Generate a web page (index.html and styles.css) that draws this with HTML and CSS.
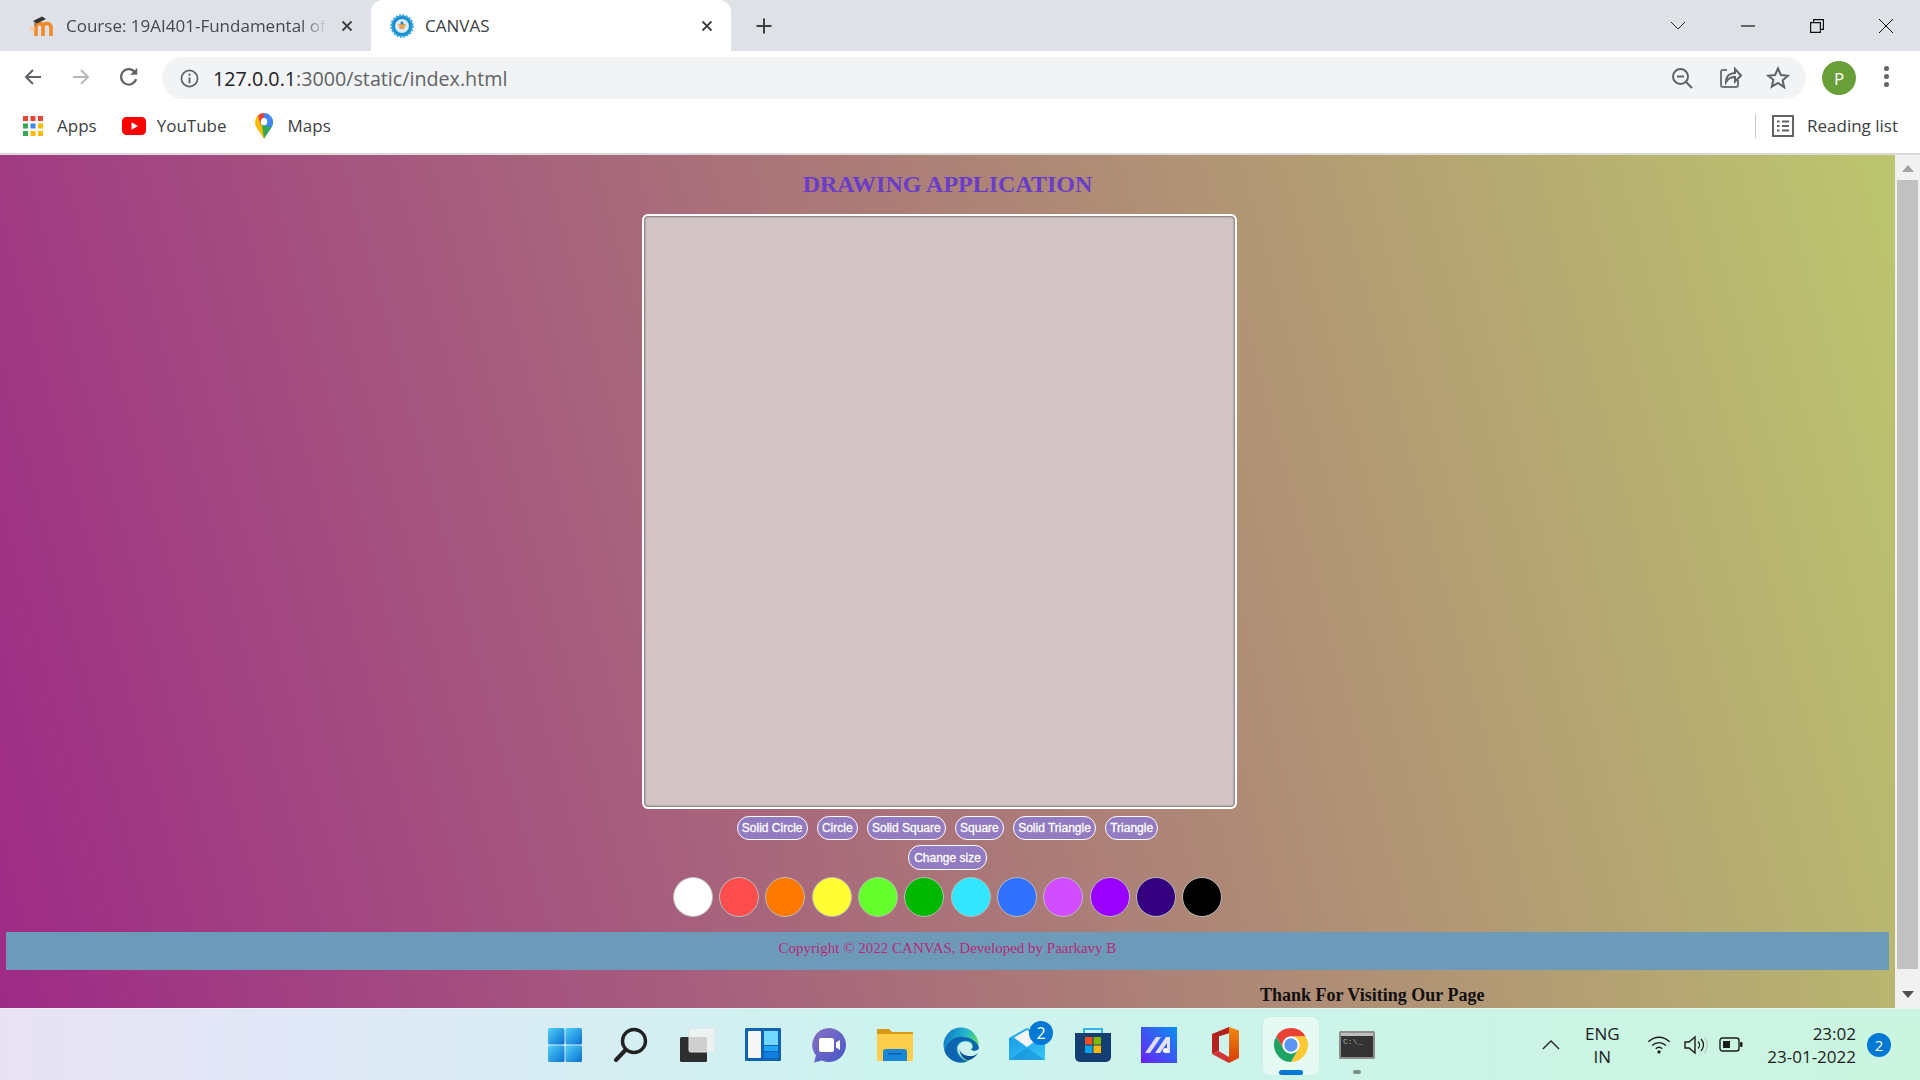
FILE: index.html
```html
<!DOCTYPE html>
<html lang="en">
<head>
<meta charset="utf-8">
<title>CANVAS</title>
<link rel="stylesheet" href="styles.css">
</head>
<body>
<svg class="defs" width="0" height="0" aria-hidden="true">
  <defs>
    <linearGradient id="gWin" x1="0" y1="0" x2="1" y2="1"><stop offset="0" stop-color="#4fd0fb"/><stop offset="1" stop-color="#0a6fd0"/></linearGradient>
    <linearGradient id="gChat" x1="0" y1="0" x2="1" y2="1"><stop offset="0" stop-color="#8a70c4"/><stop offset="1" stop-color="#4457c8"/></linearGradient>
    <linearGradient id="gEdge" x1="0" y1="0" x2="1" y2="0.4"><stop offset="0" stop-color="#0d6fc0"/><stop offset=".6" stop-color="#22b5d0"/><stop offset="1" stop-color="#5fdc6a"/></linearGradient>
    <linearGradient id="gMail" x1="0" y1="0" x2="1" y2="1"><stop offset="0" stop-color="#1a9be6"/><stop offset="1" stop-color="#38c8f5"/></linearGradient>
    <linearGradient id="gMae" x1="0" y1="1" x2="1" y2="0"><stop offset="0" stop-color="#6a20f5"/><stop offset="1" stop-color="#0a90f5"/></linearGradient>
    <linearGradient id="gOff" x1="0" y1="0" x2="0" y2="1"><stop offset="0" stop-color="#f08a12"/><stop offset="1" stop-color="#d83b01"/></linearGradient>
  </defs>
</svg>

<header class="tabstrip">
  <div class="tab">
    <svg class="fav" viewBox="0 0 24 24"><path d="M6 22V13c0-2.500 1.500-3.500 3.500-3.500S13 10.500 13 13v9M13 13c0-2.500 1.800-3.500 3.800-3.500S21 11 21 13.500V22" fill="none" stroke="#f0882a" stroke-width="3.600"/><path d="M0 13h4.500v3.500H0z" fill="#f7c9a0"/><path d="M3 7l9-4.500 4 2.500-9 4.500z" fill="#333"/><path d="M5 8v4" stroke="#555" stroke-width="1"/></svg>
    <span class="tab-title fade">Course: 19AI401-Fundamental of</span>
    <svg class="tab-x" viewBox="0 0 12 12"><path d="M1.500 1.500l9 9M10.500 1.500l-9 9" stroke="#3c4043" stroke-width="1.800"/></svg>
  </div>
  <div class="tab active">
    <svg class="fav fav-c" viewBox="0 0 24 24"><circle cx="12" cy="12" r="10.500" fill="#1a8fd0" stroke="#3aa8e0" stroke-width="2.500" stroke-dasharray="2 1.300"/><circle cx="12" cy="12" r="7" fill="#d8ebf7"/><path d="M8 10h8l-2 5h-4z" fill="#e8a45c"/><circle cx="12" cy="9" r="1.500" fill="#2b7bb5"/></svg>
    <span class="tab-title">CANVAS</span>
    <svg class="tab-x" viewBox="0 0 12 12"><path d="M1.500 1.500l9 9M10.500 1.500l-9 9" stroke="#3c4043" stroke-width="1.800"/></svg>
  </div>
  <svg class="newtab" viewBox="0 0 18 18"><path d="M9 1.500v15M1.500 9h15" stroke="#3c4043" stroke-width="2"/></svg>
  <div class="winctl">
    <svg viewBox="0 0 16 10" class="w-chev"><path d="M1 1l7 7 7-7" fill="none" stroke="#222" stroke-width="1"/></svg>
    <svg viewBox="0 0 14 14" class="w-ico"><path d="M0 7h14" stroke="#111" stroke-width="1.200"/></svg>
    <svg viewBox="0 0 14 14" class="w-ico"><path d="M.6 3.600h9.800v9.800H.6zM3.600 3.600V.6h9.800v9.800h-3" fill="none" stroke="#111" stroke-width="1.200"/></svg>
    <svg viewBox="0 0 14 14" class="w-ico"><path d="M0 0l14 14M14 0L0 14" stroke="#111" stroke-width="1"/></svg>
  </div>
</header>

<nav class="toolbar">
  <svg class="nav-ico" viewBox="0 0 20 20"><path d="M18 10H3M10 3l-7 7 7 7" fill="none" stroke="#5f6368" stroke-width="2"/></svg>
  <svg class="nav-ico" viewBox="0 0 20 20"><path d="M2 10h15M10 3l7 7-7 7" fill="none" stroke="#b5b7ba" stroke-width="2"/></svg>
  <svg class="nav-ico nav-reload" viewBox="0 0 20 20"><path d="M16.500 12a7 7 0 1 1-1.200-6.500" fill="none" stroke="#5f6368" stroke-width="2"/><path d="M17.500 1.500v6.500H11z" fill="#5f6368"/></svg>
  <div class="omnibox">
    <svg class="info" viewBox="0 0 20 20"><circle cx="10" cy="10" r="8.500" fill="none" stroke="#5f6368" stroke-width="1.800"/><path d="M10 9v6M10 5v2" stroke="#5f6368" stroke-width="2"/></svg>
    <span class="url"><span class="host">127.0.0.1</span>:3000/static/index.html</span>
    <div class="omni-right">
      <svg class="omni-ico" viewBox="0 0 24 24"><circle cx="10.500" cy="10.500" r="7.500" fill="none" stroke="#5f6368" stroke-width="2"/><path d="M7 10.500h7M16 16l6 6" stroke="#5f6368" stroke-width="2"/></svg>
      <svg class="omni-ico" viewBox="0 0 24 24"><path d="M9 4H5a2 2 0 0 0-2 2v13a2 2 0 0 0 2 2h13a2 2 0 0 0 2-2v-5" fill="none" stroke="#73767a" stroke-width="2"/><path d="M8 16c0-6 4-9 9-9V3l6 6.500-6 6V11c-4 0-7 1.500-9 5z" fill="none" stroke="#5f6368" stroke-width="2"/></svg>
      <svg class="omni-ico" viewBox="0 0 24 24"><path d="M12 2.500l2.900 6.500 7 .7-5.300 4.600 1.600 6.900L12 17l-6.200 3.700 1.600-6.900L2.100 9.700l7-.7z" fill="none" stroke="#5f6368" stroke-width="2"/></svg>
    </div>
  </div>
  <div class="avatar">P</div>
  <div class="kebab"><i></i><i></i><i></i></div>
</nav>

<nav class="bookmarks">
  <div class="bm bm-apps">
    <svg class="bm-ico" viewBox="0 0 20 20"><g fill="#ea4335"><rect x="0" y="0" width="5" height="5"/><rect x="7.500" y="0" width="5" height="5"/><rect x="15" y="0" width="5" height="5"/></g><rect x="0" y="7.500" width="5" height="5" fill="#34a853"/><rect x="7.500" y="7.500" width="5" height="5" fill="#4285f4"/><rect x="15" y="7.500" width="5" height="5" fill="#fbbc04"/><rect x="0" y="15" width="5" height="5" fill="#34a853"/><rect x="7.500" y="15" width="5" height="5" fill="#fbbc04"/><rect x="15" y="15" width="5" height="5" fill="#fbbc04"/></svg>
    <span>Apps</span>
  </div>
  <div class="bm bm-yt">
    <svg class="yt-ico" viewBox="0 0 24 18"><rect width="24" height="18" rx="4.500" fill="#f00"/><path d="M9.500 5.200v7.600l6.500-3.800z" fill="#fff"/></svg>
    <span>YouTube</span>
  </div>
  <div class="bm bm-maps">
    <svg class="maps-ico" viewBox="0 0 18 26"><path d="M9 26C6 20 0 15 0 9a9 9 0 0 1 3-6.700L9 9z" fill="#fbbc04"/><path d="M3 2.300A9 9 0 0 1 9 0l0 5a4 4 0 0 0-3 1.400z" fill="#ea4335"/><path d="M9 0a9 9 0 0 1 7 3.400L12 7a4 4 0 0 0-3-2z" fill="#4285f4"/><path d="M16 3.400A9 9 0 0 1 18 9c0 6-6 11-9 17l-2-14z" fill="#34a853"/><path d="M16 3.400A9 9 0 0 1 18 9c0 2-.7 3.800-1.700 5.500L5.500 11.500z" fill="#4285f4"/><path d="M5.500 11.500L3 2.300 9 9z" fill="#ea4335"/><circle cx="9" cy="9" r="3.300" fill="#fff"/></svg>
    <span>Maps</span>
  </div>
  <div class="reading">
    <svg class="rl-ico" viewBox="0 0 22 22"><rect x="1" y="1" width="20" height="20" fill="none" stroke="#5f6368" stroke-width="2"/><path d="M5 6.500h2.500M10 6.500h7M5 11h2.500M10 11h7M5 15.500h2.500M10 15.500h7" stroke="#5f6368" stroke-width="2"/></svg>
    <span>Reading list</span>
  </div>
</nav>

<div class="viewport">
  <main class="page">
    <h1 class="title">DRAWING APPLICATION</h1>
    <div class="board"></div>
    <div class="tools">
      <button class="tool">Solid Circle</button>
      <button class="tool">Circle</button>
      <button class="tool">Solid Square</button>
      <button class="tool">Square</button>
      <button class="tool">Solid Triangle</button>
      <button class="tool">Triangle</button>
      <button class="tool tool-size">Change size</button>
    </div>
    <div class="palette">
      <span class="swatch c-white"></span>
      <span class="swatch c-red"></span>
      <span class="swatch c-orange"></span>
      <span class="swatch c-yellow"></span>
      <span class="swatch c-lime"></span>
      <span class="swatch c-green"></span>
      <span class="swatch c-cyan"></span>
      <span class="swatch c-blue"></span>
      <span class="swatch c-pink"></span>
      <span class="swatch c-violet"></span>
      <span class="swatch c-indigo"></span>
      <span class="swatch c-black"></span>
    </div>
    <footer class="copyright">Copyright © 2022 CANVAS, Developed by Paarkavy B</footer>
    <p class="thanks">Thank For Visiting Our Page</p>
  </main>
  <aside class="scrollbar">
    <svg class="sb-arrow" viewBox="0 0 12 7"><path d="M0 7L6 0l6 7z" fill="#a3a3a3"/></svg>
    <div class="sb-thumb"></div>
    <svg class="sb-arrow" viewBox="0 0 12 7"><path d="M0 0l6 7 6-7z" fill="#505050"/></svg>
  </aside>
</div>

<footer class="taskbar">
  <div class="task-icons">
    <div class="ti"><svg viewBox="0 0 36 36"><rect x="1" y="1" width="16.500" height="16.500" rx="1.500" fill="url(#gWin)"/><rect x="18.500" y="1" width="16.500" height="16.500" rx="1.500" fill="url(#gWin)"/><rect x="1" y="18.500" width="16.500" height="16.500" rx="1.500" fill="url(#gWin)"/><rect x="18.500" y="18.500" width="16.500" height="16.500" rx="1.500" fill="url(#gWin)"/></svg></div>
    <div class="ti"><svg viewBox="0 0 36 36"><circle cx="21" cy="14" r="11.500" fill="none" stroke="#222" stroke-width="3.400"/><path d="M12.500 23L3 33" stroke="#222" stroke-width="4" stroke-linecap="round"/></svg></div>
    <div class="ti"><svg viewBox="0 0 36 36"><rect x="1" y="10" width="27" height="25" rx="1.500" fill="#2e2e2e"/><rect x="10" y="1" width="26" height="24" rx="1.500" fill="#f2f2f2" fill-opacity=".82" stroke="#e2e2e2"/></svg></div>
    <div class="ti"><svg viewBox="0 0 36 36"><rect x="0" y="1" width="36" height="33" rx="1" fill="#0f63b0"/><rect x="3" y="4" width="13" height="27" rx="1" fill="#f7f7f7"/><rect x="19" y="4" width="14" height="14" fill="#6fd8fb"/><rect x="19" y="19" width="14" height="5" fill="#1ea6f5"/><rect x="19" y="25" width="14" height="6" fill="#0f80e0"/></svg></div>
    <div class="ti"><svg viewBox="0 0 36 36"><path d="M18 1a17 17 0 1 1-7 32.500L3 35.500l2-7A17 17 0 0 1 18 1z" fill="url(#gChat)"/><rect x="8" y="11" width="15" height="14" rx="2" fill="#fff"/><path d="M25 15.500l4-2.500v10l-4-2.500z" fill="#fff"/></svg></div>
    <div class="ti"><svg viewBox="0 0 36 36"><path d="M0 3a1 1 0 0 1 1-1h11l3 3h20a1 1 0 0 1 1 1v6H0z" fill="#d69a10"/><rect x="0" y="7" width="36" height="27" rx="1" fill="#fcce4b"/><path d="M6 34V25a3 3 0 0 1 3-3h18a3 3 0 0 1 3 3v9z" fill="#1a86d8"/><rect x="11" y="26" width="14" height="1.500" fill="#0c5fa8"/></svg></div>
    <div class="ti"><svg viewBox="0 0 36 36"><circle cx="18" cy="18" r="17.500" fill="url(#gEdge)"/><path d="M36 21c-1 4-6 3.500-8 1.500 3-1 2.500-6-1.500-8-6-2.500-13 1-13 7 0 6 5 11 11 13-7 3-20 0-23-11C5 14 12 9 20 10c8 .5 15 5 16 11z" fill="#0f64b2"/><path d="M35.500 22c-2 2.500-6 2.500-8 .5 3-1.500 2-6-1.500-7.500-5.500-2-11.500 1-11.500 6.500 0 5 4 9.500 10 12 5-1 9-5.500 11-11.500z" fill="#cdf3ee"/><path d="M24.500 33.500c-4-1.500-8-6-8-11 1 4 6 7 12 6.500 3-.2 5-1.500 6.500-3-2 3.500-6 6.800-10.500 7.500z" fill="#0d4f94"/></svg></div>
    <div class="ti ti-mail"><svg viewBox="0 0 36 36"><path d="M0 11L18 1l18 10v22H0z" fill="url(#gMail)"/><path d="M5 10.500L18 3l13 7.500L18 20z" fill="#f5f5f5"/><path d="M0 11l18 10 18-10v22H0z" fill="url(#gMail)"/><path d="M0 33l18-12 18 12z" fill="#1088d8" fill-opacity=".55"/></svg><span class="ti-badge">2</span></div>
    <div class="ti"><svg viewBox="0 0 36 36"><path d="M9 6V2h18v4" fill="none" stroke="#35b5e8" stroke-width="2"/><path d="M0 6h36v24a5 5 0 0 1-5 5H5a5 5 0 0 1-5-5z" fill="#143f72"/><rect x="10" y="10" width="7.500" height="7.500" fill="#f25022"/><rect x="18.500" y="10" width="7.500" height="7.500" fill="#7fba00"/><rect x="10" y="18.500" width="7.500" height="7.500" fill="#00a4ef"/><rect x="18.500" y="18.500" width="7.500" height="7.500" fill="#ffb900"/></svg></div>
    <div class="ti"><svg viewBox="0 0 36 36"><rect width="36" height="36" fill="url(#gMae)"/><path d="M4 26L15 10h5L9 26z" fill="#dcdcfa"/><path d="M14 26L25 10h4v16h-3V16L19 26z" fill="#e4e2fb"/><circle cx="24.500" cy="23.500" r="2.500" fill="#fff"/></svg></div>
    <div class="ti"><svg viewBox="0 0 28 36"><path d="M18 0l10 3.500V31l-10 5z" fill="url(#gOff)"/><path d="M18 0L1 7v20l7-3V9.500l10-3z" fill="#b3231e"/><path d="M1 27l17 9v-6l-10-6z" fill="#d13438"/><path d="M8 9.500L18 6.500v23L8 24z" fill="#cdf3ee"/></svg></div>
    <div class="ti ti-open"><svg viewBox="-17 -17 34 34"><path d="M-13.860-8A16 16 0 0 1 13.860-8L0-8A8 8 0 0 0-6.930 4Z" fill="#e94235"/><path d="M13.860-8A16 16 0 0 1 0 16L6.930 4A8 8 0 0 0 0-8Z" fill="#fcc934"/><path d="M0 16A16 16 0 0 1-13.860-8L-6.930 4A8 8 0 0 0 6.930 4Z" fill="#1ea362"/><circle r="8" fill="#fff"/><circle r="6.300" fill="#5b96f3"/></svg></div>
    <div class="ti ti-run"><svg viewBox="0 0 36 28"><rect width="36" height="28" rx="1.500" fill="#8e8e8e"/><rect x="2" y="2" width="32" height="4" fill="#bdbdbd"/><rect x="2" y="5" width="32" height="21" fill="#333"/><text x="4" y="13" class="cmd-text">C:\_</text></svg></div>
  </div>
  <div class="tray">
    <svg class="tray-chev" viewBox="0 0 20 11"><path d="M1 10l9-9 9 9" fill="none" stroke="#222" stroke-width="1.400"/></svg>
    <div class="lang"><span>ENG</span><span>IN</span></div>
    <svg class="tray-wifi" viewBox="0 0 26 20"><path d="M1.500 7c7-6.500 16-6.500 23 0M5.500 11c4.500-4 10.500-4 15 0M9.500 14.500c2-1.700 5-1.700 7 0" fill="none" stroke="#1c1c1c" stroke-width="1.500"/><circle cx="13" cy="18" r="1.800" fill="#1c1c1c"/></svg>
    <svg class="tray-vol" viewBox="0 0 24 20"><path d="M1 7v6h4l6 5V2L5 7z" fill="none" stroke="#1c1c1c" stroke-width="1.400"/><path d="M14 6.500c2 2 2 5 0 7M17 4c3.300 3.500 3.300 8.500 0 12" fill="none" stroke="#1c1c1c" stroke-width="1.300"/><path d="M20.500 2c3.500 5 3.500 11 0 16" fill="none" stroke="#b5c4bc" stroke-width="1.200"/></svg>
    <svg class="tray-bat" viewBox="0 0 24 15"><rect x="1" y="1" width="19" height="13" rx="2.500" fill="none" stroke="#1c1c1c" stroke-width="1.400"/><rect x="4" y="4" width="7" height="7" fill="#1c1c1c"/><rect x="21" y="5" width="2.500" height="5" rx="1" fill="#1c1c1c"/></svg>
    <div class="clock"><span>23:02</span><span>23-01-2022</span></div>
    <span class="notif">2</span>
  </div>
</footer>
</body>
</html>
```

FILE: styles.css
```css
* { box-sizing: border-box; }
html, body { height: 100%; }
body {
  margin: 0;
  height: 1080px;
  width: 1920px;
  overflow: hidden;
  display: flex;
  flex-direction: column;
  font-family: "Open Sans", "Noto Sans", sans-serif;
  color: #202124;
}
.defs { position: absolute; }

/* tab strip */
.tabstrip {
  height: 51px;
  background: #dee1e6;
  display: flex;
  align-items: center;
  flex: none;
}
.tab {
  height: 51px;
  width: 360px;
  display: flex;
  align-items: center;
  padding: 0 18px 0 30px;
  color: #45484d;
  font-size: 17px;
}
.tab:first-child { width: 371px; }
.tab.active {
  background: #fff;
  border-radius: 12px 12px 0 0;
  padding-left: 19px;
  color: #3c4043;
}
.fav { width: 24px; height: 24px; flex: none; margin-right: 12px; }
.fav-c { margin-right: 11px; }
.tab-title { flex: 1; white-space: nowrap; overflow: hidden; }
.fade {
  -webkit-mask-image: linear-gradient(to right, #000 90%, transparent 100%);
  mask-image: linear-gradient(to right, #000 90%, transparent 100%);
}
.tab-x { width: 12px; height: 12px; flex: none; margin-left: 14px; }
.newtab { width: 18px; height: 18px; margin-left: 24px; }
.winctl { margin-left: auto; display: flex; align-items: center; padding-right: 27px; gap: 55px; height: 42px; }
.w-chev { width: 16px; height: 10px; }
.w-ico { width: 14px; height: 14px; }

/* toolbar */
.toolbar {
  height: 51px;
  background: #fff;
  display: flex;
  align-items: center;
  padding: 0 0 0 23px;
  flex: none;
}
.nav-ico { width: 20px; height: 20px; margin-right: 28px; flex: none; }
.nav-reload { width: 22px; height: 22px; margin-right: 22px; margin-left: -1px; }
.omnibox {
  width: 1644px;
  height: 42px;
  margin-top: 3px;
  border-radius: 21px;
  background: #f1f3f4;
  display: flex;
  align-items: center;
  padding: 0 16px 0 18px;
}
.info { width: 19px; height: 19px; flex: none; margin-right: 14px; }
.url { font-size: 19.700px; color: #5f6368; }
.host { color: #202124; }
.omni-right { margin-left: auto; display: flex; gap: 24px; align-items: center; }
.omni-ico { width: 24px; height: 24px; }
.avatar {
  width: 34px; height: 34px; border-radius: 50%;
  background: #689f38; color: #fff;
  margin-left: 16px; margin-top: 3px;
  display: flex; align-items: center; justify-content: center;
  font-size: 17px;
  flex: none;
}
.kebab { display: flex; flex-direction: column; gap: 3px; margin-left: 28px; }
.kebab i { width: 5px; height: 5px; border-radius: 50%; background: #5f6368; display: block; }

/* bookmarks */
.bookmarks {
  height: 53px;
  background: #fff;
  border-bottom: 2px solid #dadada;
  display: flex;
  align-items: center;
  padding: 0 0 4px 23px;
  font-size: 17px;
  color: #3c4043;
  flex: none;
}
.bm { display: flex; align-items: center; }
.bm-ico { width: 20px; height: 20px; margin-right: 14px; }
.yt-ico { width: 24px; height: 18px; margin-right: 11px; }
.maps-ico { width: 18px; height: 26px; margin-right: 15px; }
.bm-yt { margin-left: 25px; }
.bm-maps { margin-left: 28px; }
.reading { margin-left: auto; display: flex; align-items: center; border-left: 1px solid #c8cacc; height: 24px; padding-left: 16px; margin-right: 22px; }
.rl-ico { width: 22px; height: 22px; margin-right: 13px; }

/* page */
.viewport { flex: 1; display: flex; min-height: 0; }
.page {
  flex: 1;
  min-width: 0;
  display: flex;
  flex-direction: column;
  align-items: center;
  overflow: hidden;
  background: linear-gradient(75deg, #9e2a86, #ab7a78 50%, #bcc66e);
}
.title {
  margin: 15px 0 16px;
  font: bold 24px/28px "Liberation Serif", serif;
  color: #6a3dc8;
}
.board {
  width: 595px;
  height: 595px;
  margin-right: 16px;
  flex: none;
  background: #d3c5c6;
  border: 2px solid #fff;
  border-radius: 6px;
  box-shadow: inset 0 0 2px 1px #7f7377;
}
.tools {
  width: 440px;
  margin-top: 7px;
  display: flex;
  flex-wrap: wrap;
  justify-content: center;
  gap: 5px 9px;
}
.tool {
  height: 24px;
  padding: 0 4.200px;
  border: 1.500px solid #fff;
  border-radius: 12px;
  background: #927bc0;
  color: #fff;
  font: 12px "Liberation Sans", sans-serif;
  -webkit-text-stroke: .3px #fff;
  white-space: nowrap;
}
.tool-size { height: 25px; padding: 0 5px; }
.palette { display: flex; gap: 6.300px; margin-top: 7px; }
.swatch { width: 40px; height: 40px; border-radius: 50%; border: 1px solid #b9bcb8; display: block; }
.c-white { background: #fff; }
.c-red { background: #ff4d4d; }
.c-orange { background: #ff7800; }
.c-yellow { background: #ffff33; }
.c-lime { background: #66ff2e; }
.c-green { background: #00b800; }
.c-cyan { background: #33e6ff; }
.c-blue { background: #3072ff; }
.c-pink { background: #d24dff; }
.c-violet { background: #9900ff; }
.c-indigo { background: #330080; }
.c-black { background: #000; }
.copyright {
  align-self: stretch;
  margin: 15px 6px 0;
  height: 38px;
  padding-top: 7px;
  background: #6d9ab8;
  color: #b82a78;
  font: 15px/18px "Liberation Serif", serif;
  text-align: center;
  flex: none;
}
.thanks {
  align-self: flex-start;
  margin: 15px 0 0 1260px;
  font: bold 18px/21px "Liberation Serif", serif;
  color: #111;
  white-space: nowrap;
}

/* fake scrollbar */
.scrollbar {
  width: 25px;
  flex: none;
  background: #f1f1f1;
  display: flex;
  flex-direction: column;
  align-items: center;
  padding: 10px 2px;
}
.sb-arrow { width: 12px; height: 7px; flex: none; }
.sb-thumb { width: 21px; flex: 1; background: #c1c1c1; margin: 8px 0 22px; }

/* taskbar */
.taskbar {
  height: 72px;
  flex: none;
  display: flex;
  align-items: center;
  background: linear-gradient(to right, #e8e2f5, #e0e8f7 16%, #cdf3ef 45%, #cbf5e0 100%);
  border-top: 1px solid rgba(255,255,255,.4);
  padding-left: 532px;
  padding-right: 29px;
  color: #1c1c1c;
}
.task-icons { display: flex; align-items: center; height: 100%; }
.ti {
  width: 66px;
  height: 100%;
  display: flex;
  align-items: center;
  justify-content: center;
  position: relative;
}
.ti svg { width: 36px; height: 36px; }
.ti:nth-child(11) svg { width: 28px; }
.ti-open::before {
  content: "";
  position: absolute;
  left: 5px; right: 5px; top: 8px; bottom: 5px;
  background: rgba(255,255,255,.5);
  border-radius: 6px;
  box-shadow: 0 0 1px rgba(0,0,0,.15);
}
.ti-open svg { position: relative; }
.ti-open::after {
  content: "";
  position: absolute;
  left: 21px; right: 21px; bottom: 5px;
  height: 5px;
  border-radius: 3px;
  background: #0078d4;
}
.ti-run::after {
  content: "";
  position: absolute;
  left: 29px; right: 29px; bottom: 6px;
  height: 4px;
  border-radius: 2px;
  background: #7f8f8a;
}
.ti-run svg { height: 28px; }
.cmd-text { font: 8px "Liberation Mono", monospace; fill: #aaa; }
.ti-badge {
  position: absolute;
  left: 35px; top: 12px;
  width: 24px; height: 24px;
  border-radius: 50%;
  background: #0078d4;
  color: #fff;
  font-size: 16px;
  line-height: 24px;
  text-align: center;
}
.tray { margin-left: auto; display: flex; align-items: center; }
.tray-chev { width: 18px; height: 10px; margin-right: 19px; }
.lang { display: flex; flex-direction: column; align-items: center; font-size: 17px; line-height: 23px; width: 46px; margin-right: 22px; }
.tray-wifi { width: 24px; height: 19px; margin-right: 12.500px; }
.tray-vol { width: 24px; height: 20px; margin-right: 11.500px; }
.tray-bat { width: 24px; height: 15px; margin-right: 24px; }
.clock { display: flex; flex-direction: column; align-items: flex-end; font-size: 17px; line-height: 23px; margin-right: 11px; }
.notif {
  width: 24px; height: 24px;
  border-radius: 50%;
  background: #0078d4;
  color: #fff;
  font-size: 15px;
  line-height: 24px;
  text-align: center;
}
```
